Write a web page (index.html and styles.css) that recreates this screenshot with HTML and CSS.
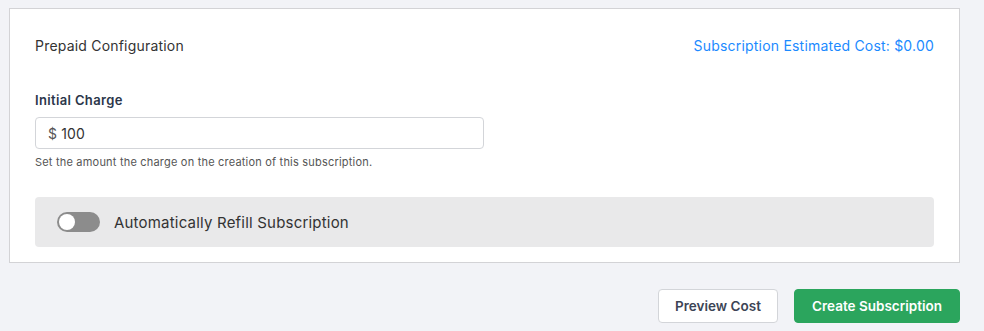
FILE: index.html
```html
<!DOCTYPE html>
<html lang="en">
<head>
<meta charset="utf-8">
<title>Prepaid Configuration</title>
<link rel="stylesheet" href="styles.css">
</head>
<body>
<div class="page">
  <section class="card">
    <div class="card-head">
      <span class="title">Prepaid Configuration</span>
      <span class="estimate">Subscription Estimated Cost: $0.00</span>
    </div>
    <div class="field">
      <label class="label" for="charge">Initial Charge</label>
      <div class="input">
        <span class="prefix">$</span>
        <span class="value" id="charge">100</span>
      </div>
      <p class="help">Set the amount the charge on the creation of this subscription.</p>
    </div>
    <div class="refill">
      <span class="toggle"><span class="knob"></span></span>
      <span class="refill-text">Automatically Refill Subscription</span>
    </div>
  </section>
  <div class="actions">
    <button class="btn btn-outline">Preview Cost</button>
    <button class="btn btn-primary">Create Subscription</button>
  </div>
</div>
</body>
</html>
```
FILE: styles.css
```css
* { box-sizing: border-box; }
html, body { margin: 0; padding: 0; }
body {
  background: #f2f3f7;
  font-family: Inter, "Open Sans", "Liberation Sans", sans-serif;
  color: #333;
  letter-spacing: 0.2px;
}
.page {
  padding: 8px 24px 0 9px;
}
.card {
  background: #fff;
  border: 1px solid #d3d3d6;
  padding: 26px 25px 15px 25px;
}
.card-head {
  display: flex;
  justify-content: space-between;
  align-items: center;
  height: 20px;
  font-size: 14px;
}
.title { color: #333; }
.estimate { color: #1b8aff; }
.field {
  margin-top: 35px;
}
.label {
  display: block;
  font-size: 13px;
  font-weight: 600;
  letter-spacing: 0.35px;
  color: #2b364a;
  line-height: 20px;
  margin-bottom: 7px;
}
.input {
  width: 449px;
  height: 32px;
  border: 1px solid #d3d5d9;
  border-radius: 4px;
  display: flex;
  align-items: center;
  padding: 0 12px;
  font-size: 14px;
  color: #333;
  gap: 4px;
}
.prefix { color: #555; }
.help {
  margin: 6px 0 0;
  font-size: 11px;
  line-height: 14px;
  color: #555;
}
.refill {
  margin-top: 28px;
  height: 50px;
  background: #e9e9ea;
  border-radius: 4px;
  display: flex;
  align-items: center;
  padding-left: 22px;
  gap: 14px;
}
.toggle {
  width: 43px;
  height: 20px;
  border-radius: 10px;
  background: #8c8c8c;
  display: flex;
  align-items: center;
  padding-left: 2px;
}
.knob {
  width: 16px;
  height: 16px;
  border-radius: 50%;
  background: #fff;
}
.refill-text {
  font-size: 15px;
  color: #333;
}
.actions {
  margin-top: 26px;
  display: flex;
  justify-content: flex-end;
  gap: 16px;
}
.btn {
  height: 34px;
  border-radius: 4px;
  font-family: inherit;
  font-size: 13.5px;
  font-weight: 600;
  letter-spacing: 0;
  cursor: pointer;
}
.btn-outline {
  width: 120px;
  background: #fff;
  border: 1px solid #d3d5d9;
  color: #3c4455;
}
.btn-primary {
  width: 166px;
  background: #2ba55d;
  border: 1px solid #2ba55d;
  color: #fff;
}
```
